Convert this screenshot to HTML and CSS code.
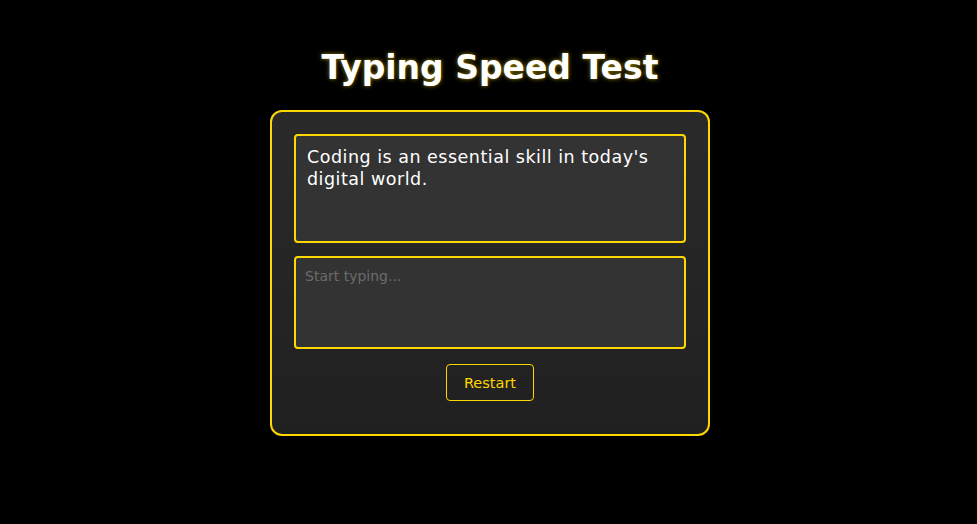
FILE: index.html
```html
<!DOCTYPE html>
<html>
<head>
<meta charset="utf-8">
<link rel="stylesheet" href="styles.css">
</head>
<body>
<main class="page">
  <h1 class="title">Typing Speed Test</h1>
  <section class="card">
    <div class="quote">Coding is an essential skill in today's digital world.</div>
    <textarea class="input" placeholder="Start typing..."></textarea>
    <div class="actions">
      <button class="restart">Restart</button>
    </div>
  </section>
</main>
</body>
</html>
```

FILE: styles.css
```css
html, body {
  margin: 0;
  padding: 0;
  background: #000;
  height: 100%;
}
body {
  font-family: "DejaVu Sans", "Open Sans", sans-serif;
  color: #fff;
}
.page {
  display: flex;
  flex-direction: column;
  align-items: center;
  padding-top: 46px;
  padding-left: 3px;
}
.title {
  margin: 0 0 20px 0;
  font-size: 33px;
  line-height: 44px;
  font-weight: 700;
  color: #fff;
  text-shadow: 0 0 4px rgba(255, 215, 0, 0.6);
}
.card {
  box-sizing: border-box;
  width: 440px;
  height: 326px;
  padding: 22px;
  border: 2px solid #ffd700;
  border-radius: 12px;
  background: linear-gradient(#2a2a2a, #202020);
  display: flex;
  flex-direction: column;
}
.quote {
  box-sizing: border-box;
  height: 109px;
  padding: 10px 11px;
  border: 2px solid #ffd700;
  border-radius: 4px;
  background: #333;
  font-size: 17.5px;
  line-height: 22px;
  letter-spacing: 0.5px;
  color: #fff;
}
.input {
  box-sizing: border-box;
  margin-top: 13px;
  height: 93px;
  padding: 8px 9px;
  border: 2px solid #ffd700;
  border-radius: 4px;
  background: #333;
  color: #fff;
  font-family: inherit;
  font-size: 14px;
  line-height: 20px;
  resize: none;
  outline: none;
}
.input::placeholder {
  color: #6b6b6b;
}
.actions {
  display: flex;
  justify-content: center;
  margin-top: 15px;
}
.restart {
  box-sizing: border-box;
  width: 88px;
  height: 37px;
  border: 1px solid #ffd700;
  border-radius: 4px;
  background: transparent;
  color: #ffd700;
  font-family: inherit;
  font-size: 14.5px;
  cursor: pointer;
}
```
